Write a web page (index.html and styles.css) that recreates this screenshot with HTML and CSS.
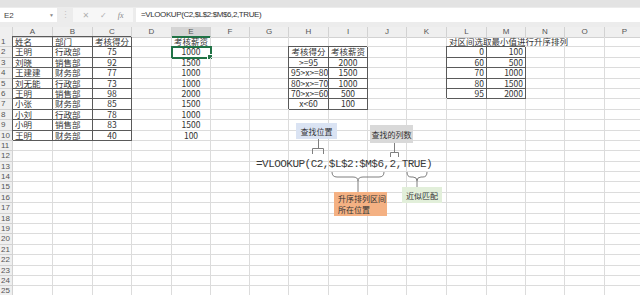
FILE: index.html
```html
<!DOCTYPE html>
<html lang="zh-CN">
<head>
    <meta charset="UTF-8">
    <title>VLOOKUP 区间查找</title>
    <link rel="stylesheet" href="styles.css">
</head>
<body>

    <div class="topbar"></div>

    <div class="fbar">
        <div class="namebox">E2<span class="dd">▼</span></div>
        <div class="sep">⋮</div>
        <div class="tools"><span>✕</span><span>✓</span><span class="fx">fx</span></div>
        <div class="finput">=VLOOKUP(C2,$L$2:$M$6,2,TRUE)</div>
    </div>

    <div class="sheet">
        <div class="row head">
            <div></div><div>A</div><div>B</div><div>C</div><div>D</div><div class="on">E</div><div>F</div><div>G</div><div>H</div>
            <div>I</div><div>J</div><div>K</div><div>L</div><div>M</div><div>N</div><div>O</div><div>P</div>
        </div>
        <div class="row">
            <div class="rh">1</div><div class="t">姓名</div><div class="t">部门</div><div class="t ctr">考核得分</div><div></div><div class="ctr">考核薪资</div>
            <div></div><div></div><div></div><div></div><div></div><div></div><div class="wide">对区间选取最小值进行升序排列</div><div></div><div></div>
        </div>
        <div class="row">
            <div class="rh">2</div><div class="t">王明</div><div class="t">行政部</div><div class="t ctr">75</div><div></div><div class="ctr sel">1000</div>
            <div></div><div></div><div class="t ctr">考核得分</div><div class="t ctr">考核薪资</div><div></div><div></div><div class="t rt">0</div><div class="t rt">100</div><div></div><div></div><div></div>
        </div>
        <div class="row">
            <div class="rh">3</div><div class="t">刘晓</div><div class="t">销售部</div><div class="t ctr">92</div><div></div><div class="ctr">1500</div>
            <div></div><div></div><div class="t ctr">&gt;=95</div><div class="t ctr">2000</div><div></div><div></div><div class="t rt">60</div><div class="t rt">500</div><div></div><div></div><div></div>
        </div>
        <div class="row">
            <div class="rh">4</div><div class="t">王建建</div><div class="t">财务部</div><div class="t ctr">77</div><div></div><div class="ctr">1000</div>
            <div></div><div></div><div class="t ctr">95&gt;x&gt;=80</div><div class="t ctr">1500</div><div></div><div></div><div class="t rt">70</div><div class="t rt">1000</div><div></div><div></div><div></div>
        </div>
        <div class="row">
            <div class="rh">5</div><div class="t">刘无能</div><div class="t">行政部</div><div class="t ctr">73</div><div></div><div class="ctr">1000</div>
            <div></div><div></div><div class="t ctr">80&gt;x&gt;=70</div><div class="t ctr">1000</div><div></div><div></div><div class="t rt">80</div><div class="t rt">1500</div><div></div><div></div><div></div>
        </div>
        <div class="row">
            <div class="rh">6</div><div class="t">王明</div><div class="t">销售部</div><div class="t ctr">98</div><div></div><div class="ctr">2000</div>
            <div></div><div></div><div class="t ctr">70&gt;x&gt;=60</div><div class="t ctr">500</div><div></div><div></div><div class="t rt">95</div><div class="t rt">2000</div><div></div><div></div><div></div>
        </div>
        <div class="row">
            <div class="rh">7</div><div class="t">小张</div><div class="t">财务部</div><div class="t ctr">85</div><div></div><div class="ctr">1500</div>
            <div></div><div></div><div class="t ctr">x&lt;60</div><div class="t ctr">100</div><div></div><div></div><div></div><div></div><div></div><div></div><div></div>
        </div>
        <div class="row">
            <div class="rh">8</div><div class="t">小刘</div><div class="t">行政部</div><div class="t ctr">78</div><div></div><div class="ctr">1000</div>
            <div></div><div></div><div></div><div></div><div></div><div></div><div></div><div></div><div></div><div></div><div></div>
        </div>
        <div class="row">
            <div class="rh">9</div><div class="t">小明</div><div class="t">销售部</div><div class="t ctr">83</div><div></div><div class="ctr">1500</div>
            <div></div><div></div><div></div><div></div><div></div><div></div><div></div><div></div><div></div><div></div><div></div>
        </div>
        <div class="row">
            <div class="rh">10</div><div class="t">王明</div><div class="t">财务部</div><div class="t ctr">40</div><div></div><div class="ctr">100</div>
            <div></div><div></div><div></div><div></div><div></div><div></div><div></div><div></div><div></div><div></div><div></div>
        </div>
        <div class="row"><div class="rh">11</div><div></div><div></div><div></div><div></div><div></div><div></div><div></div><div></div><div></div><div></div><div></div><div></div><div></div><div></div><div></div><div></div></div>
        <div class="row"><div class="rh">12</div><div></div><div></div><div></div><div></div><div></div><div></div><div></div><div></div><div></div><div></div><div></div><div></div><div></div><div></div><div></div><div></div></div>
        <div class="row"><div class="rh">13</div><div></div><div></div><div></div><div></div><div></div><div></div><div></div><div></div><div></div><div></div><div></div><div></div><div></div><div></div><div></div><div></div></div>
        <div class="row"><div class="rh">14</div><div></div><div></div><div></div><div></div><div></div><div></div><div></div><div></div><div></div><div></div><div></div><div></div><div></div><div></div><div></div><div></div></div>
        <div class="row"><div class="rh">15</div><div></div><div></div><div></div><div></div><div></div><div></div><div></div><div></div><div></div><div></div><div></div><div></div><div></div><div></div><div></div><div></div></div>
        <div class="row"><div class="rh">16</div><div></div><div></div><div></div><div></div><div></div><div></div><div></div><div></div><div></div><div></div><div></div><div></div><div></div><div></div><div></div><div></div></div>
        <div class="row"><div class="rh">17</div><div></div><div></div><div></div><div></div><div></div><div></div><div></div><div></div><div></div><div></div><div></div><div></div><div></div><div></div><div></div><div></div></div>
        <div class="row"><div class="rh">18</div><div></div><div></div><div></div><div></div><div></div><div></div><div></div><div></div><div></div><div></div><div></div><div></div><div></div><div></div><div></div><div></div></div>
        <div class="row"><div class="rh">19</div><div></div><div></div><div></div><div></div><div></div><div></div><div></div><div></div><div></div><div></div><div></div><div></div><div></div><div></div><div></div><div></div></div>
        <div class="row"><div class="rh">20</div><div></div><div></div><div></div><div></div><div></div><div></div><div></div><div></div><div></div><div></div><div></div><div></div><div></div><div></div><div></div><div></div></div>
        <div class="row"><div class="rh">21</div><div></div><div></div><div></div><div></div><div></div><div></div><div></div><div></div><div></div><div></div><div></div><div></div><div></div><div></div><div></div><div></div></div>
        <div class="row"><div class="rh">22</div><div></div><div></div><div></div><div></div><div></div><div></div><div></div><div></div><div></div><div></div><div></div><div></div><div></div><div></div><div></div><div></div></div>
        <div class="row"><div class="rh">23</div><div></div><div></div><div></div><div></div><div></div><div></div><div></div><div></div><div></div><div></div><div></div><div></div><div></div><div></div><div></div><div></div></div>
        <div class="row"><div class="rh">24</div><div></div><div></div><div></div><div></div><div></div><div></div><div></div><div></div><div></div><div></div><div></div><div></div><div></div><div></div><div></div><div></div></div>
        <div class="row"><div class="rh">25</div><div></div><div></div><div></div><div></div><div></div><div></div><div></div><div></div><div></div><div></div><div></div><div></div><div></div><div></div><div></div><div></div></div>
    </div>

    <!-- annotations drawn over the sheet -->
    <svg class="links" width="640" height="295" viewBox="0 0 640 295">
        <path d="M318.5 139 V148.5 M312.5 154 V148.5 H323.5 V154"/>
        <path d="M394.5 143 V152.5 M390.5 157 V152.5 H398.5 V157"/>
        <path d="M332 172 Q332 177 337 177 H353 Q358 177 358 181 Q358 177 363 177 H379 Q384 177 384 172 M358 181 V192"/>
        <path d="M407 172 Q407 177 411 177 H413 Q417 177 417 181 Q417 177 421 177 H423 Q427 177 427 172 M417 181 V187"/>
    </svg>

    <div class="formula">=VLOOKUP(C2,$L$2:$M$6,2,TRUE)</div>
    <div class="note n-pos">查找位置</div>
    <div class="note n-col">查找的列数</div>
    <div class="note n-range"><span>升序排列区间</span><span>所在位置</span></div>
    <div class="note n-match">近似匹配</div>

</body>
</html>
```

FILE: styles.css
```css
* {
    margin: 0;
    padding: 0;
    box-sizing: border-box;
}

body {
    position: relative;
    width: 640px;
    height: 295px;
    overflow: hidden;
    background-color: #fff;
    color: #333;
    font-family: "Noto Sans CJK SC", sans-serif;
}

/* formula bar */
.topbar {
    height: 7px;
    background-color: #e3e3e3;
}

.fbar {
    display: flex;
    align-items: flex-start;
    height: 20px;
    padding-top: 1px;
    background-color: #ececec;
}

.namebox {
    width: 57px;
    height: 14px;
    display: flex;
    justify-content: space-between;
    align-items: center;
    padding: 0 3px 0 4px;
    background-color: #fff;
    color: #444;
    font: 8px "Liberation Sans", sans-serif;
}

.namebox .dd {
    font-size: 5px;
    color: #888;
}

.sep {
    width: 16px;
    text-align: center;
    color: #c4c4c4;
    font-size: 9px;
    line-height: 14px;
}

.tools {
    width: 60px;
    height: 14px;
    display: flex;
    justify-content: space-around;
    align-items: center;
    padding: 0 4px;
    background-color: #f7f7f7;
    color: #b0b0b0;
    font: 8px "DejaVu Sans", sans-serif;
}

.tools .fx {
    font: italic 8px "Liberation Serif", serif;
    color: #888;
}

.finput {
    flex: 1;
    height: 14px;
    margin-left: 3px;
    padding-left: 5px;
    background-color: #fff;
    color: #333;
    font: 8px/14px "Liberation Sans", sans-serif;
    letter-spacing: -0.4px;
}

/* grid */
.row {
    display: grid;
    grid-template-columns: 13px 40px 40px 39px 40px 39px 39px 39px 40px 39px 39px 40px 40px 39px 39px 40px 40px;
    height: 10.4px;
}

.row > div {
    border-right: 1px solid #dcdcdc;
    border-bottom: 1px solid #dcdcdc;
    padding: 0 2px;
    font-size: 8.5px;
    line-height: 9px;
    white-space: nowrap;
    position: relative;
}

.row.head {
    height: 10px;
}

.row.head > div {
    background-color: #efefef;
    border-color: #d2d2d2;
    text-align: center;
    color: #555;
    font: 8px/9px "Liberation Sans", sans-serif;
}

.row.head > .on {
    background-color: #d5d5d5;
    border-bottom: 2px solid #217346;
}

.row > .rh {
    background-color: #efefef;
    border-color: #d2d2d2;
    padding: 0 0 0 1px;
    color: #555;
    font: 8px/9px "Liberation Sans", sans-serif;
}

.row > .t {
    border-right-color: #5a5a5a;
    border-bottom-color: #5a5a5a;
    box-shadow: -1px -1px 0 #5a5a5a;
}

.row > .wide {
    grid-column: span 3;
}

.ctr {
    text-align: center;
}

.rt {
    text-align: right;
}

.row > .sel {
    outline: 2px solid #217346;
    outline-offset: -1px;
}

.sel::after {
    content: "";
    position: absolute;
    right: -3px;
    bottom: -3px;
    width: 4px;
    height: 4px;
    background-color: #217346;
    border: 1px solid #fff;
}

/* annotations */
.links {
    position: absolute;
    left: 0;
    top: 0;
}

.links path {
    fill: none;
    stroke: #7f7f7f;
    stroke-width: 1;
}

.formula {
    position: absolute;
    left: 256px;
    top: 157px;
    color: #3a3a3a;
    font: 11px/14px "Liberation Mono", monospace;
    letter-spacing: -0.53px;
}

.note {
    position: absolute;
    display: flex;
    align-items: center;
    justify-content: center;
    font-size: 8px;
    line-height: 11px;
    color: #333;
}

.n-pos {
    left: 296px;
    top: 123px;
    width: 41px;
    height: 16px;
    background-color: #dae3f3;
}

.n-col {
    left: 370px;
    top: 125px;
    width: 43px;
    height: 18px;
    background-color: #d9d9d9;
}

.n-range {
    left: 334px;
    top: 192px;
    width: 53px;
    height: 24px;
    flex-direction: column;
    align-items: flex-start;
    padding-left: 4px;
    background-color: #f4b183;
}

.n-match {
    left: 402px;
    top: 187px;
    width: 40px;
    height: 16px;
    background-color: #e2efda;
}
```
